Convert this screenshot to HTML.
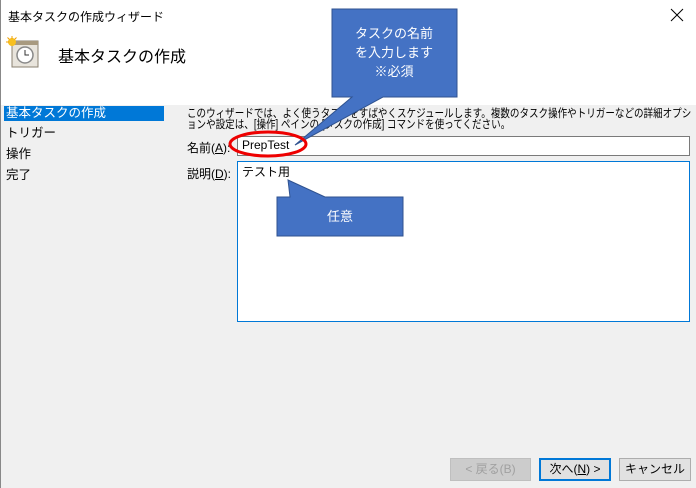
<!DOCTYPE html>
<html><head><meta charset="utf-8"><style>
*{margin:0;padding:0;box-sizing:border-box}
body{width:696px;height:488px;position:relative;overflow:hidden;background:#f0f0f0;font-family:"Liberation Sans","Noto Sans CJK JP",sans-serif;font-size:12px;color:#000}
.a{position:absolute}
.nav{left:4px;width:160px;height:15px;line-height:15px;padding-left:2px;font-size:12.5px}
.btn{top:458px;height:23px;border:1px solid #adadad;background:#e1e1e1;text-align:center;line-height:21px;font-size:12px}
.ln{white-space:nowrap;font-size:11.5px;line-height:11px;transform:scaleX(0.83);transform-origin:left top}
</style></head><body>
<div class="a" style="left:0;top:0;width:696px;height:105px;background:#fff"></div>
<div class="a" style="left:0;top:0;width:1px;height:488px;background:#888"></div>
<div class="a" style="left:8px;top:8px;font-size:12px">基本タスクの作成ウィザード</div>
<svg class="a" style="left:670px;top:8px" width="14" height="14"><path d="M1 1L13 13M13 1L1 13" stroke="#000" stroke-width="1"/></svg>
<svg class="a" style="left:6px;top:36px" width="34" height="32" viewBox="0 0 34 32">
<rect x="6" y="5" width="26" height="26" fill="#e8e4dc" stroke="#8a8070"/>
<rect x="6" y="5" width="26" height="4" fill="#a89a80"/>
<circle cx="19" cy="19" r="8" fill="#fff" stroke="#888" stroke-width="1.5"/>
<path d="M19 14v5h4" stroke="#333" fill="none"/>
<circle cx="6" cy="6" r="4" fill="#f8c020"/>
<path d="M6 0v3M0 6h3M1.5 1.5l2 2M10.5 1.5l-2 2" stroke="#f0a000"/>
</svg>
<div class="a" style="left:58px;top:43px;font-size:16px">基本タスクの作成</div>
<div class="a nav" style="top:106px;background:#0078d7;color:#fff">基本タスクの作成</div>
<div class="a nav" style="top:126px">トリガー</div>
<div class="a nav" style="top:147px">操作</div>
<div class="a nav" style="top:168px">完了</div>
<div class="a ln" style="left:187px;top:109px">このウィザードでは、よく使うタスクをすばやくスケジュールします。複数のタスク操作やトリガーなどの詳細オプシ</div>
<div class="a ln" style="left:187px;top:120px">ョンや設定は、[操作] ペインの [タスクの作成] コマンドを使ってください。</div>
<div class="a" style="left:187px;top:139px">名前(<u>A</u>):</div>
<div class="a" style="left:237px;top:136px;width:453px;height:20px;background:#fff;border:1px solid #7a7a7a;padding:1px 4px">PrepTest</div>
<div class="a" style="left:187px;top:165px">説明(<u>D</u>):</div>
<div class="a" style="left:237px;top:161px;width:453px;height:161px;background:#fff;border:1px solid #0078d7;padding:1px 4px">テスト用</div>
<div class="a btn" style="left:450px;width:81px;color:#a0a0a0;background:#cccccc;border-color:#bfbfbf">&lt; 戻る(B)</div>
<div class="a btn" style="left:539px;width:72px;border:2px solid #0078d7;line-height:19px">次へ(<u>N</u>) &gt;</div>
<div class="a btn" style="left:619px;width:72px">キャンセル</div>
<svg class="a" style="left:0;top:0" width="696" height="488">
<path d="M332 9H457V97H383L295 145L352 97H332Z" fill="#4472c4" stroke="#2f528f"/>
<path d="M277 197H290L288 180L325 197H403V236H277Z" fill="#4472c4" stroke="#2f528f"/>
<ellipse cx="268" cy="144" rx="38" ry="12" fill="none" stroke="#e00" stroke-width="3"/>
<text x="394" y="38" fill="#fff" font-size="13" text-anchor="middle" font-family="Liberation Sans,Noto Sans CJK JP,sans-serif">タスクの名前</text>
<text x="394" y="57" fill="#fff" font-size="13" text-anchor="middle" font-family="Liberation Sans,Noto Sans CJK JP,sans-serif">を入力します</text>
<text x="394" y="76" fill="#fff" font-size="13" text-anchor="middle" font-family="Liberation Sans,Noto Sans CJK JP,sans-serif">※必須</text>
<text x="340" y="221" fill="#fff" font-size="13" text-anchor="middle" font-family="Liberation Sans,Noto Sans CJK JP,sans-serif">任意</text>
</svg>
</body></html>
